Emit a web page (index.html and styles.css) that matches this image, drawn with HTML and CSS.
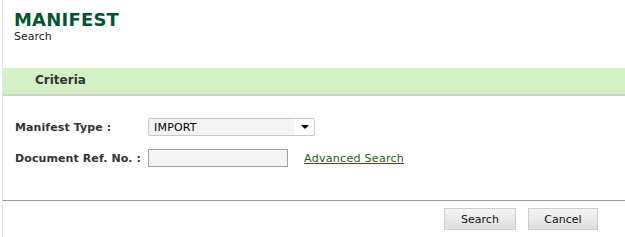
FILE: index.html
```html
<!DOCTYPE html>
<html lang="en">
<head>
  <meta charset="UTF-8" />
  <title>Manifest - Search</title>
  <link rel="stylesheet" href="styles.css">
</head>
<body>
  <div class="page">
    <div class="page-head">
      <h1>MANIFEST</h1>
      <div class="crumb">Search</div>
    </div>

    <div class="section-bar">Criteria</div>

    <div class="criteria">
      <label class="field-label" for="manifestType">Manifest Type :</label>
      <div class="select-wrap">
        <select id="manifestType">
          <option>IMPORT</option>
          <option>EXPORT</option>
        </select>
        <span class="select-arrow"></span>
      </div>

      <label class="field-label" for="docRef">Document Ref. No. :</label>
      <div class="field-row">
        <input type="text" id="docRef">
        <a href="#" class="adv-link">Advanced Search</a>
      </div>
    </div>

    <div class="actions">
      <button class="btn">Search</button>
      <button class="btn">Cancel</button>
    </div>
  </div>
</body>
</html>
```

FILE: styles.css
```css
* {
  box-sizing: border-box;
}
body {
  margin: 0;
  background: #fff;
  font-family: 'DejaVu Sans', Verdana, sans-serif;
  font-size: 11px;
  color: #000;
}

.page {
  margin-left: 2px;
  border-left: 1px solid #e2e2e2;
  min-height: 237px;
}

.page-head {
  padding: 10px 0 0 11px;
}
.page-head h1 {
  margin: 0;
  font-size: 18px;
  line-height: 20px;
  font-weight: bold;
  letter-spacing: 0.2px;
  color: #00552b;
}
.crumb {
  margin-top: 0;
  line-height: 13px;
  color: #222;
}

/* green section header */
.section-bar {
  margin-top: 25px;
  height: 28px;
  padding-left: 32px;
  background: #d4f1c6;
  border-bottom: 2px solid #cfcfcf;
  font-size: 12px;
  font-weight: bold;
  line-height: 25px;
  color: #333;
}

.criteria {
  display: grid;
  grid-template-columns: 133px auto;
  row-gap: 13px;
  align-items: center;
  padding: 22px 0 33px 12px;
}
.field-label {
  font-weight: bold;
  letter-spacing: 0.1px;
  color: #333;
}

.select-wrap {
  position: relative;
  width: 167px;
  height: 18px;
}
.select-wrap select {
  appearance: none;
  -webkit-appearance: none;
  width: 100%;
  height: 18px;
  padding: 0 0 0 5px;
  border: 1px solid #c8c8c8;
  border-radius: 2px;
  background: linear-gradient(to right, #f3f3f3 0, #f3f3f3 145px, #fff 145px);
  background-clip: padding-box;
  font-family: inherit;
  font-size: 11px;
  letter-spacing: 0.2px;
  color: #000;
  outline: none;
}
.select-arrow {
  position: absolute;
  right: 6px;
  top: 7px;
  width: 0;
  height: 0;
  border-left: 4px solid transparent;
  border-right: 4px solid transparent;
  border-top: 4px solid #000;
  pointer-events: none;
}

.field-row {
  display: flex;
  align-items: center;
  gap: 16px;
}
.field-row input {
  width: 140px;
  height: 18px;
  margin: 0;
  border: 1px solid #a0a0a0;
  background: #f4f4f4;
  font-family: inherit;
  font-size: 11px;
  padding: 0 3px;
}
.adv-link {
  color: #1b5e20;
  letter-spacing: 0.3px;
  text-decoration: underline;
}

.actions {
  display: flex;
  justify-content: flex-end;
  gap: 12px;
  padding: 7px 27px 0 0;
  border-top: 1px solid #999;
}
.btn {
  width: 72px;
  height: 22px;
  border: 1px solid #cdcdcd;
  background: linear-gradient(#f4f4f4, #dedede);
  font-family: inherit;
  font-size: 11px;
  color: #111;
  padding: 0;
  cursor: pointer;
}
.btn + .btn {
  width: 70px;
}
```
